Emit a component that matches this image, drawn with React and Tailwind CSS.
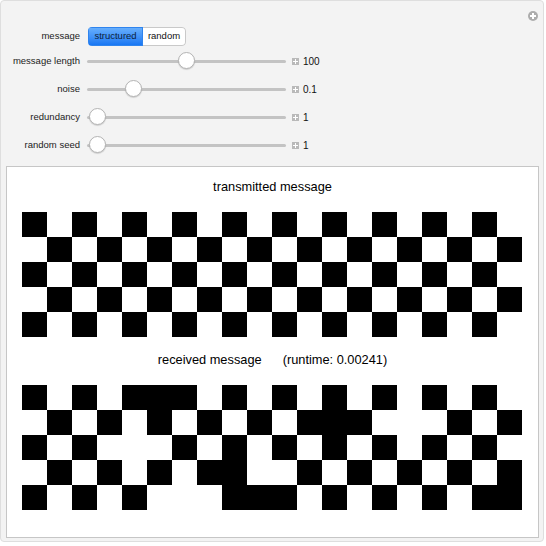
import React from 'react';

const sent = [
  [0, 2, 4, 6, 8, 10, 12, 14, 16, 18],
  [1, 3, 5, 7, 9, 11, 13, 15, 17, 19],
  [0, 2, 4, 6, 8, 10, 12, 14, 16, 18],
  [1, 3, 5, 7, 9, 11, 13, 15, 17, 19],
  [0, 2, 4, 6, 8, 10, 12, 14, 16, 18],
];

const received = [
  [0, 2, 4, 5, 6, 8, 10, 12, 14, 16, 18],
  [1, 3, 5, 7, 9, 11, 12, 13, 17, 19],
  [0, 2, 6, 8, 10, 12, 14, 16, 18],
  [1, 3, 5, 7, 8, 11, 13, 15, 17, 19],
  [0, 2, 4, 8, 9, 10, 12, 14, 16, 18, 19],
];

const BitGrid = ({ rows }) => (
  <div className="ml-[15px] grid grid-cols-[repeat(20,25px)] auto-rows-[25px]">
    {rows.map((blacks, r) =>
      Array.from({ length: 20 }, (_, c) => (
        <div key={`${r}-${c}`} className={blacks.includes(c) ? 'bg-black' : 'bg-white'} />
      ))
    )}
  </div>
);

const PlusBox = () => (
  <span className="relative flex h-[7px] w-[7px] items-center justify-center bg-[#b9b9b9]">
    <span className="absolute h-[1px] w-[5px] bg-white" />
    <span className="absolute h-[5px] w-[1px] bg-white" />
  </span>
);

const Label = ({ children }) => (
  <div className="w-[79px] shrink-0 text-right text-[9.5px] text-[#222]">{children}</div>
);

const Slider = ({ label, frac, value }) => (
  <div className="flex h-[28px] items-center">
    <Label>{label}</Label>
    <div className="relative ml-[7px] h-[28px] w-[199px]">
      <div className="absolute left-0 right-0 top-[13px] h-[3px] rounded-full bg-[#c3c3c3]" />
      <div
        className="absolute top-[5px] h-[17px] w-[17px] rounded-full border border-[#b4b4b4] bg-white shadow-[0_1px_1px_rgba(0,0,0,0.15)]"
        style={{ left: `${2 + frac * 178}px` }}
      />
    </div>
    <div className="ml-[6px]">
      <PlusBox />
    </div>
    <span className="ml-[4px] text-[10px] text-[#111]">{value}</span>
  </div>
);

export default function App() {
  return (
    <div className="h-[546px] w-[546px] bg-white font-['Liberation_Sans',Arial,sans-serif]">
      <div className="relative h-[542px] w-[544px] rounded-[4px] border border-[#dedede] bg-[#f3f3f3] pt-[26px]">
        {/* top-right add button */}
        <div className="absolute right-[5px] top-[10px] flex h-[10px] w-[10px] items-center justify-center rounded-full bg-[#acacac]">
          <span className="absolute h-[2px] w-[6px] bg-white" />
          <span className="absolute h-[6px] w-[2px] bg-white" />
        </div>

        <div className="flex h-[20px] items-start">
          <div className="flex h-[19px] items-center">
            <Label>message</Label>
          </div>
          <div className="ml-[8px] flex h-[19px] overflow-hidden rounded-[4px] text-[9.5px]">
            <div className="flex w-[55px] items-center justify-center border border-[#2f84ee] bg-gradient-to-b from-[#66aefc] to-[#1777f3] text-[#0d1f3a]">
              structured
            </div>
            <div className="flex w-[43px] items-center justify-center rounded-r-[4px] border border-l-0 border-[#c9c9c9] bg-white text-[#111]">
              random
            </div>
          </div>
        </div>

        <Slider label="message length" frac={0.5} value="100" />
        <Slider label="noise" frac={0.2} value="0.1" />
        <Slider label="redundancy" frac={0} value="1" />
        <Slider label="random seed" frac={0} value="1" />

        <div className="ml-[5px] mt-[7px] h-[372px] w-[533px] border border-[#c6c6c6] bg-white pt-[10px]">
          <div className="text-center text-[12.8px] leading-[20px] text-black">transmitted message</div>
          <div className="mt-[15px]">
            <BitGrid rows={sent} />
          </div>
          <div className="mt-[13px] flex justify-center gap-[21px] text-[12.8px] leading-[20px] text-black">
            <span>received message</span>
            <span>(runtime: 0.00241)</span>
          </div>
          <div className="mt-[15px]">
            <BitGrid rows={received} />
          </div>
        </div>
      </div>
    </div>
  );
}
